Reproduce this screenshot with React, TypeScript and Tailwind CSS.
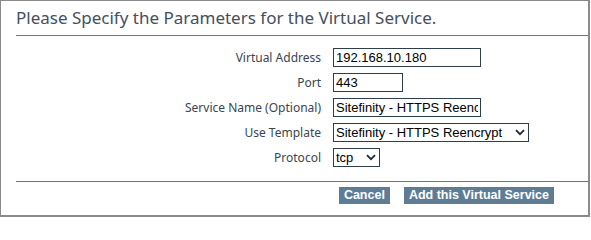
import type { ReactNode } from "react";

const labelCls = "text-right text-[12px] leading-[19px] text-[#3b4452]";
const boxCls =
  "h-[19px] border border-[#2e3e4e] bg-white px-[2px] text-[13px] leading-[17px] text-black outline-none";

function Row({ label, children }: { label: string; children: ReactNode }) {
  return (
    <>
      <label className={labelCls}>{label}</label>
      <div className="flex">{children}</div>
    </>
  );
}

function Select({ value, width }: { value: string; width: string }) {
  return (
    <div className={`relative flex items-center ${boxCls} ${width} pr-[16px]`}>
      <span className="whitespace-nowrap">{value}</span>
      <svg
        className="absolute right-[3px] top-[5px]"
        width="10"
        height="7"
        viewBox="0 0 10 7"
        fill="none"
      >
        <path d="M1 1.2 5 5.2 9 1.2" stroke="#1f2937" strokeWidth="1.8" />
      </svg>
    </div>
  );
}

export default function App() {
  return (
    <div className="h-[217px] w-[590px] border border-r-2 border-b-2 border-[#8a8a8a] bg-white font-['Liberation_Sans',Arial,sans-serif]">
      <h1 className="pl-[15px] pt-[5px] font-['Noto_Sans',sans-serif] text-[17px] leading-[24px] text-[#444f5e]">
        Please Specify the Parameters for the Virtual Service.
      </h1>
      <div className="ml-[15px] mt-[5px] h-px bg-[#607888]" />

      <div className="mt-[12px] grid grid-cols-[305px_auto] gap-x-[12px] gap-y-[6px] pl-[15px] font-['Noto_Sans',sans-serif]">
        <Row label="Virtual Address">
          <input
            readOnly
            value="192.168.10.180"
            className={`${boxCls} w-[148px] font-['Liberation_Sans',Arial,sans-serif]`}
          />
        </Row>
        <Row label="Port">
          <input
            readOnly
            value="443"
            className={`${boxCls} w-[70px] font-['Liberation_Sans',Arial,sans-serif]`}
          />
        </Row>
        <Row label="Service Name (Optional)">
          <input
            readOnly
            value="Sitefinity - HTTPS Reencrypt"
            className={`${boxCls} w-[148px] font-['Liberation_Sans',Arial,sans-serif]`}
          />
        </Row>
        <Row label="Use Template">
          <div className="font-['Liberation_Sans',Arial,sans-serif]">
            <Select value="Sitefinity - HTTPS Reencrypt" width="w-[196px]" />
          </div>
        </Row>
        <Row label="Protocol">
          <div className="font-['Liberation_Sans',Arial,sans-serif]">
            <Select value="tcp" width="w-[47px]" />
          </div>
        </Row>
      </div>

      <div className="ml-[15px] mt-[14px] h-px bg-[#607888]" />
      <div className="mt-[5px] flex justify-end gap-[14px] pr-[34px]">
        <button
          type="button"
          className="h-[17px] bg-[#5e7d94] px-[5px] text-[12.5px] font-bold leading-[17px] text-white"
        >
          Cancel
        </button>
        <button
          type="button"
          className="h-[17px] bg-[#5e7d94] px-[5px] text-[12.5px] font-bold leading-[17px] text-white"
        >
          Add this Virtual Service
        </button>
      </div>
    </div>
  );
}
